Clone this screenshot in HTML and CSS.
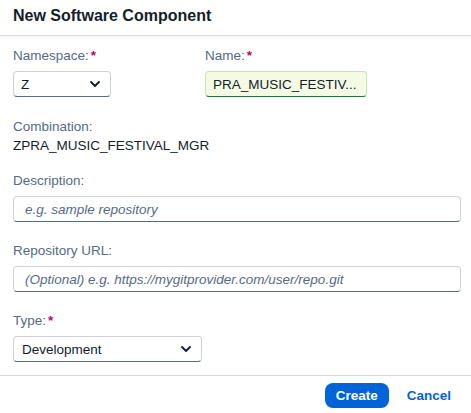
FILE: index.html
```html
<!DOCTYPE html>
<html lang="en">
<head>
<meta charset="utf-8">
<title>New Software Component</title>
<link rel="stylesheet" href="styles.css">
</head>
<body>
<div class="dialog">
  <header class="dialog-header">
    <h1 class="dialog-title">New Software Component</h1>
  </header>
  <main class="dialog-body">
    <div class="row-first">
      <div class="field">
        <label class="label">Namespace:<span class="req">*</span></label>
        <div class="select select-ns">
          <span class="select-text">Z</span>
          <svg class="chev" width="10" height="6" viewBox="0 0 10 6"><path d="M1 1l4 4 4-4" fill="none" stroke="#131e29" stroke-width="1.8" stroke-linecap="round" stroke-linejoin="round"/></svg>
        </div>
      </div>
      <div class="field">
        <label class="label">Name:<span class="req">*</span></label>
        <div class="input input-success input-name"><span class="input-text">PRA_MUSIC_FESTIV...</span></div>
      </div>
    </div>
    <div class="combo">
      <div class="label label-tight">Combination:</div>
      <div class="value">ZPRA_MUSIC_FESTIVAL_MGR</div>
    </div>
    <div class="field field-desc">
      <label class="label">Description:</label>
      <div class="input input-wide"><span class="placeholder">e.g. sample repository</span></div>
    </div>
    <div class="field field-gap">
      <label class="label">Repository URL:</label>
      <div class="input input-wide"><span class="placeholder">(Optional) e.g. https://mygitprovider.com/user/repo.git</span></div>
    </div>
    <div class="field field-gap">
      <label class="label">Type:<span class="req">*</span></label>
      <div class="select select-type">
        <span class="select-text">Development</span>
        <svg class="chev" width="10" height="6" viewBox="0 0 10 6"><path d="M1 1l4 4 4-4" fill="none" stroke="#131e29" stroke-width="1.8" stroke-linecap="round" stroke-linejoin="round"/></svg>
      </div>
    </div>
  </main>
  <footer class="dialog-footer">
    <button class="btn btn-primary">Create</button>
    <button class="btn btn-ghost">Cancel</button>
  </footer>
</div>
</body>
</html>
```

FILE: styles.css
```css
* { box-sizing: border-box; }
html, body { margin: 0; padding: 0; background: #ffffff; }
body {
  font-family: "Liberation Sans", Arial, sans-serif;
  color: #131e29;
}
.dialog {
  width: 471px;
  height: 413px;
  display: flex;
  flex-direction: column;
  background: #fff;
}
.dialog-header {
  height: 36px;
  padding: 7px 13px 0;
  border-bottom: 1px solid #d9d9d9;
  box-shadow: 0 1px 3px rgba(0, 0, 0, 0.06);
}
.dialog-title {
  margin: 0;
  font-size: 16px;
  line-height: 18px;
  font-weight: 700;
  color: #131e29;
}
.dialog-body {
  padding: 11px 10px 0 13px;
  display: flex;
  flex-direction: column;
}
.row-first {
  display: grid;
  grid-template-columns: 192px 162px;
}
.field { display: flex; flex-direction: column; }
.label {
  font-size: 13.5px;
  line-height: 18px;
  color: #556b82;
  margin-bottom: 6px;
}
.label-tight { margin-bottom: 1px; }
.req {
  color: #ba066c;
  font-weight: 700;
  margin-left: 2px;
}
.select, .input {
  height: 26px;
  border: 1px solid #cdd3d9;
  border-bottom-color: #556b82;
  border-radius: 4px;
  display: flex;
  align-items: center;
  font-size: 13.5px;
  background: #fff;
}
.select {
  justify-content: space-between;
  padding: 0 10px 0 7px;
}
.select-ns { width: 98px; }
.select-type { width: 189px; }
.select-type { padding-left: 8px; }
.chev { display: block; }
.input { padding: 0 8px 0 7px; }
.input-success {
  background: #f5fae5;
  border-color: #c3e6b8;
  border-bottom-color: #256f3a;
}
.input-name { width: 162px; }
.input-wide { width: 448px; padding-left: 11px; }
.placeholder {
  font-style: italic;
  color: #556b82;
  white-space: nowrap;
}
.combo {
  margin-top: 21px;
  display: flex;
  flex-direction: column;
}
.value {
  font-size: 13.5px;
  line-height: 18px;
  color: #131e29;
}
.field-desc { margin-top: 17px; }
.field-gap { margin-top: 20px; }
.dialog-footer {
  margin-top: auto;
  height: 38px;
  border-top: 1px solid #d9d9d9;
  display: flex;
  justify-content: flex-end;
  align-items: flex-start;
  padding: 7px 10px 0 0;
  gap: 8px;
}
.btn {
  height: 25px;
  border: none;
  border-radius: 8px;
  font-family: "Liberation Sans", Arial, sans-serif;
  font-size: 13.5px;
  font-weight: 700;
  padding: 0 10px;
  cursor: pointer;
}
.btn-primary {
  width: 64px;
  background: #0064d9;
  color: #fff;
}
.btn-ghost {
  background: transparent;
  color: #0064d9;
}
```
